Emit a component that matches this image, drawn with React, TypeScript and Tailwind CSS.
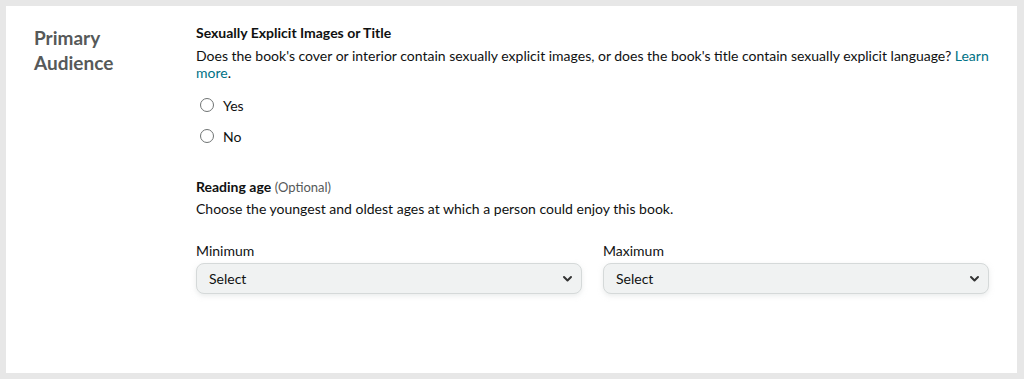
import React from "react";

function Chevron() {
  return (
    <svg width="11" height="11" viewBox="0 0 11 11" className="text-[#333]">
      <path d="M2 4 L5.5 7.5 L9 4" fill="none" stroke="currentColor" strokeWidth="2" strokeLinecap="round" strokeLinejoin="round" />
    </svg>
  );
}

function SelectBox({ label }: { label: string }) {
  return (
    <div className="flex flex-col">
      <div className="text-[14px] leading-[18px] text-[#0f1111] mb-[3px]">{label}</div>
      <div className="flex items-center justify-between h-[31px] rounded-[8px] border border-[#d5d9d9] bg-[#f0f2f2] shadow-[0_2px_5px_0_rgba(213,217,217,0.5)] pl-[12px] pr-[8px]">
        <span className="text-[14px] text-[#0f1111]">Select</span>
        <Chevron />
      </div>
    </div>
  );
}

function Radio({ label }: { label: string }) {
  return (
    <label className="flex items-center gap-[9px] h-[18px]">
      <span className="w-[14px] h-[14px] rounded-full border border-[#6f7373] bg-white ml-[4px]" />
      <span className="text-[14px] text-[#0f1111]">{label}</span>
    </label>
  );
}

export default function App() {
  return (
    <div className="w-[1024px] h-[379px] bg-[#e7e7e7] pt-[6px] pl-[6px] pr-[7px] pb-[6px]" style={{ fontFamily: 'Lato, "Noto Sans", sans-serif' }}>
      <div className="bg-white h-full flex">
        <div className="w-[190px] pl-[28px] pt-[19px] shrink-0">
          <div className="text-[19px] leading-[25px] font-bold text-[#565959]">
            Primary
            <br />
            Audience
          </div>
        </div>
        <div className="flex-1 pr-[28px] pt-[18px]">
          <div className="text-[14px] leading-[18px] font-bold text-[#0f1111]">Sexually Explicit Images or Title</div>
          <div className="text-[14px] leading-[17px] text-[#0f1111] mt-[5px]">
            Does the book's cover or interior contain sexually explicit images, or does the book's title contain sexually explicit language?{" "}
            <span className="text-[#007185]">Learn more</span>.
          </div>
          <div className="flex flex-col gap-[13px] mt-[15px]">
            <Radio label="Yes" />
            <Radio label="No" />
          </div>
          <div className="mt-[33px] text-[14px] leading-[18px] text-[#0f1111]">
            <span className="font-bold">Reading age</span>{" "}
            <span className="text-[13px] text-[#565959]">(Optional)</span>
          </div>
          <div className="text-[14px] leading-[18px] text-[#0f1111] mt-[4px]">
            Choose the youngest and oldest ages at which a person could enjoy this book.
          </div>
          <div className="grid grid-cols-2 gap-[21px] mt-[24px]">
            <SelectBox label="Minimum" />
            <SelectBox label="Maximum" />
          </div>
        </div>
      </div>
    </div>
  );
}
